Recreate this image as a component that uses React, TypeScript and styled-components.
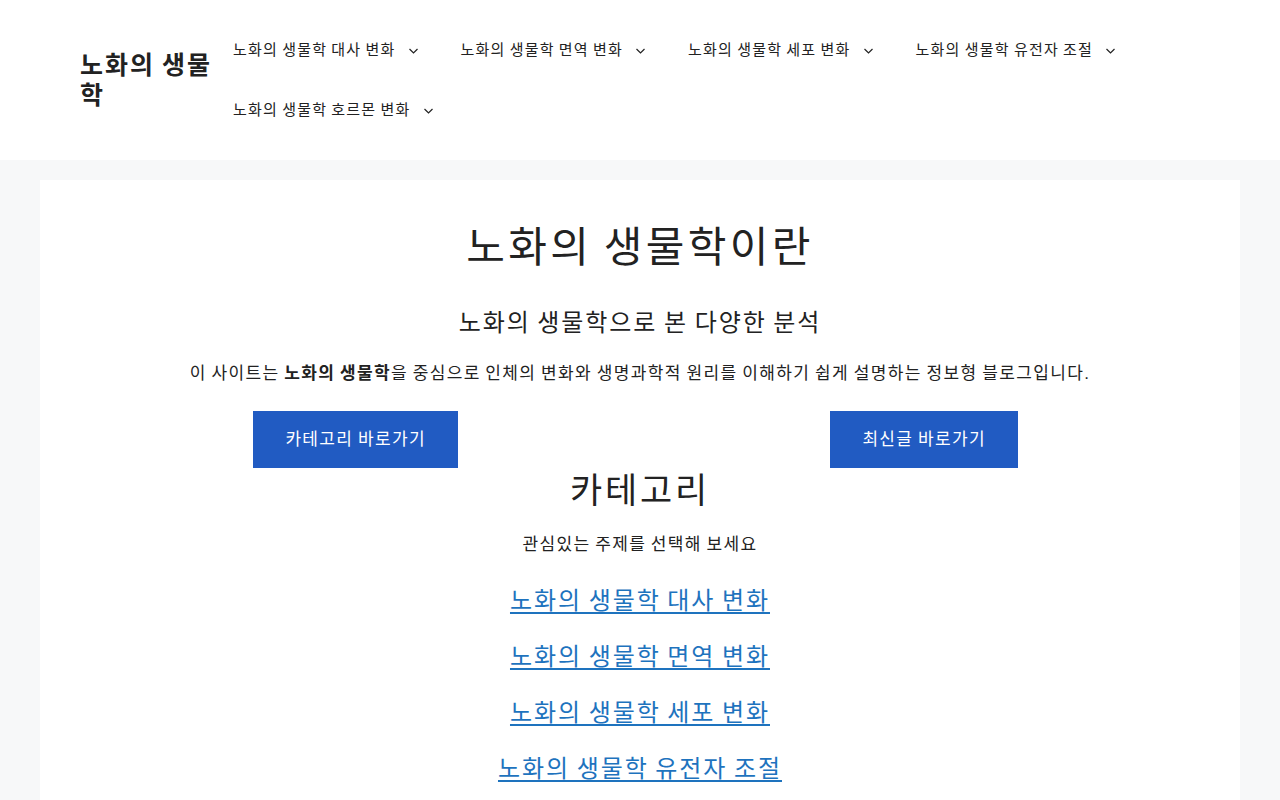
import styled, { createGlobalStyle } from "styled-components";

const GlobalStyle = createGlobalStyle`
  * {
    box-sizing: border-box;
    letter-spacing: 0.08em;
    word-spacing: -0.08em;
  }
  body {
    margin: 0;
    background-color: #f7f8f9;
    color: #222222;
    font-family: "Liberation Sans", "Noto Sans CJK SC", sans-serif;
    font-size: 17px;
  }
`;

const Header = styled.header`
  background-color: #ffffff;
`;

const HeaderInner = styled.div`
  max-width: 1200px;
  margin: 0 auto;
  padding: 20px 40px;
  display: flex;
  align-items: center;
`;

const SiteTitle = styled.p`
  flex: 0 0 133px;
  margin: 0;
  font-size: 25px;
  font-weight: 700;
  line-height: 30px;
  color: #222222;
`;

const Nav = styled.nav`
  flex: 1;
`;

const MenuList = styled.ul`
  list-style: none;
  margin: 0;
  padding: 0;
  display: flex;
  flex-wrap: wrap;
`;

const MenuItem = styled.li`
  a {
    display: flex;
    align-items: center;
    padding: 0 20px;
    line-height: 60px;
    font-size: 15px;
    color: #222222;
    text-decoration: none;
  }
`;

const Toggle = styled.span`
  display: inline-flex;
  padding-left: 10px;
  svg {
    width: 15px;
    height: 17px;
  }
`;

const Content = styled.main`
  max-width: 1200px;
  margin: 20px auto 0;
  padding: 40px;
  background-color: #ffffff;
  text-align: center;
`;

const Title = styled.h1`
  margin: 3px 0 36px;
  font-size: 42px;
  font-weight: 400;
  line-height: 50px;
`;

const SubTitle = styled.h2<{ $size?: number; $top?: number; $after?: number }>`
  margin: ${(props) => props.$top ?? 0}px 0 ${(props) => props.$after ?? 21}px;
  font-size: ${(props) => props.$size ?? 24}px;
  font-weight: 400;
  line-height: 1.2;
`;

const Text = styled.p<{ $after?: number }>`
  margin: 0 0 ${(props) => props.$after ?? 0}px;
  font-size: 17px;
  line-height: 29px;
  strong {
    font-weight: 700;
  }
`;

const Buttons = styled.div`
  display: grid;
  grid-template-columns: 1fr 1fr;
  column-gap: 17px;
`;

const ButtonCol = styled.div`
  display: flex;
  justify-content: center;
`;

const Button = styled.a`
  display: inline-block;
  padding: 16px 32px;
  line-height: 25px;
  font-size: 17px;
  background-color: #215bc2;
  color: #ffffff;
  text-decoration: none;
`;

const CategoryList = styled.div`
  display: flex;
  flex-direction: column;
`;

const CategoryLink = styled.a`
  display: block;
  height: 56px;
  line-height: 56px;
  font-size: 24px;
  color: #1e73be;
  text-decoration: underline;
  text-underline-offset: 3px;
`;

function Chevron() {
  return (
    <svg viewBox="0 0 15 17" fill="none" stroke="#222222" strokeWidth="1.2">
      <path d="M3.5 7l4 4 4-4" />
    </svg>
  );
}

const menu = [
  "노화의 생물학 대사 변화",
  "노화의 생물학 면역 변화",
  "노화의 생물학 세포 변화",
  "노화의 생물학 유전자 조절",
  "노화의 생물학 호르몬 변화",
];

const categories = [
  "노화의 생물학 대사 변화",
  "노화의 생물학 면역 변화",
  "노화의 생물학 세포 변화",
  "노화의 생물학 유전자 조절",
];

function App() {
  return (
    <>
      <GlobalStyle />
      <Header>
        <HeaderInner>
          <SiteTitle>노화의 생물학</SiteTitle>
          <Nav>
            <MenuList>
              {menu.map((item) => (
                <MenuItem key={item}>
                  <a href="#">
                    {item}
                    <Toggle>
                      <Chevron />
                    </Toggle>
                  </a>
                </MenuItem>
              ))}
            </MenuList>
          </Nav>
        </HeaderInner>
      </Header>
      <Content>
        <Title>노화의 생물학이란</Title>
        <SubTitle>노화의 생물학으로 본 다양한 분석</SubTitle>
        <Text $after={23}>
          이 사이트는 <strong>노화의 생물학</strong>을 중심으로 인체의 변화와
          생명과학적 원리를 이해하기 쉽게 설명하는 정보형 블로그입니다.
        </Text>
        <Buttons>
          <ButtonCol>
            <Button href="#">카테고리 바로가기</Button>
          </ButtonCol>
          <ButtonCol>
            <Button href="#">최신글 바로가기</Button>
          </ButtonCol>
        </Buttons>
        <SubTitle $size={35} $top={2} $after={18}>
          카테고리
        </SubTitle>
        <Text $after={14}>관심있는 주제를 선택해 보세요</Text>
        <CategoryList>
          {categories.map((cat) => (
            <CategoryLink key={cat} href="#">
              {cat}
            </CategoryLink>
          ))}
        </CategoryList>
      </Content>
    </>
  );
}

export default App;
